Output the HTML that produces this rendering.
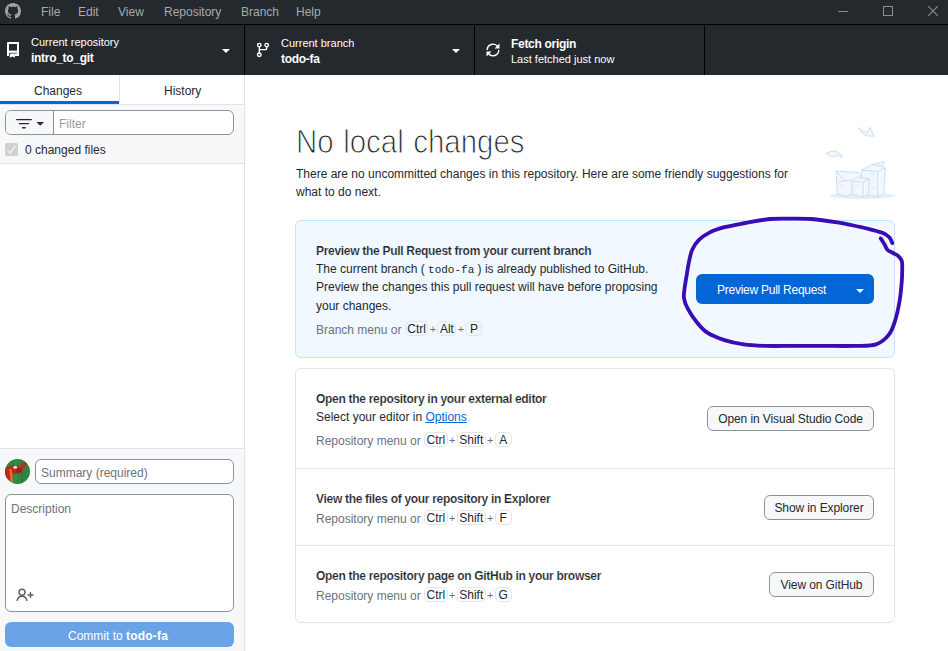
<!DOCTYPE html>
<html><head><meta charset="utf-8">
<style>
*{box-sizing:border-box;margin:0;padding:0}
html,body{width:948px;height:651px;overflow:hidden;background:#fff;font-family:"Liberation Sans",sans-serif;font-size:12px;color:#24292e;position:relative}
.a{position:absolute;white-space:nowrap;line-height:1}
#title{position:absolute;left:0;top:0;width:948px;height:24px;background:#24292e}
#title .m{position:absolute;top:5px;color:#a8abad;font-size:12px;white-space:nowrap}
#tline{position:absolute;left:0;top:24px;width:948px;height:1px;background:#000}
#toolbar{position:absolute;left:0;top:25px;width:948px;height:50px;background:#24292e}
.sep{position:absolute;top:25px;width:1px;height:50px;background:#000}
.tb1{position:absolute;color:#fff;font-size:11px;white-space:nowrap;line-height:1}
.tb2{position:absolute;color:#fff;font-size:12px;font-weight:bold;white-space:nowrap;line-height:1;letter-spacing:-0.3px}
.b{font-weight:bold;letter-spacing:-0.3px}
.g{color:#6a737d}
.kbd{display:inline-block;border:1px solid #e1e4e8;border-radius:5px;padding:0 1.5px;line-height:15px;height:15px;vertical-align:1px;color:#24292e;background:transparent;min-width:17px;text-align:center}
.plus{display:inline-block;width:9px;text-align:center;color:#6a737d;font-size:11px;vertical-align:1px}
.btn{position:absolute;border:1px solid #8a939d;border-radius:6px;background:#f6f8fa;color:#24292e;text-align:center;line-height:25px;white-space:nowrap;letter-spacing:-0.1px}
</style></head><body>
<div id="title">
  <svg style="position:absolute;left:5px;top:3px" width="16" height="16" viewBox="0 0 16 16"><path fill="#9da1a5" d="M8 0C3.58 0 0 3.58 0 8c0 3.54 2.29 6.53 5.47 7.59.4.07.55-.17.55-.38 0-.19-.01-.82-.01-1.49-2.01.37-2.530-.49-2.690-.94-.09-.23-.48-.94-.82-1.13-.28-.15-.68-.52-.01-.53.63-.01 1.08.58 1.23.82.72 1.21 1.87.87 2.33.66.07-.52.28-.87.51-1.07-1.78-.2-3.64-.89-3.64-3.95 0-.87.31-1.59.82-2.15-.08-.2-.36-1.02.08-2.12 0 0 .67-.21 2.2.82.64-.18 1.32-.27 2-.27.68 0 1.36.09 2 .27 1.53-1.04 2.2-.82 2.2-.82.44 1.1.16 1.92.08 2.12.51.56.82 1.27.82 2.15 0 3.07-1.87 3.75-3.65 3.95.29.25.54.73.54 1.48 0 1.07-.01 1.93-.01 2.2 0 .21.15.46.55.38A8.013 8.013 0 0016 8c0-4.42-3.58-8-8-8z"/></svg>
  <span class="m" style="left:41px">File</span>
  <span class="m" style="left:78px">Edit</span>
  <span class="m" style="left:118px">View</span>
  <span class="m" style="left:164px">Repository</span>
  <span class="m" style="left:241px">Branch</span>
  <span class="m" style="left:296px">Help</span>
  <div style="position:absolute;left:838px;top:11px;width:10px;height:1px;background:#8b8e91"></div>
  <div style="position:absolute;left:883px;top:6px;width:10px;height:10px;border:1px solid #8b8e91"></div>
  <svg style="position:absolute;left:928px;top:6px" width="10" height="10" viewBox="0 0 10 10"><path d="M0 0L10 10M10 0L0 10" stroke="#8b8e91" stroke-width="1.1"/></svg>
</div>
<div id="tline"></div>
<div id="toolbar"></div>
<div class="sep" style="left:244px"></div>
<div class="sep" style="left:474px"></div>
<div class="sep" style="left:704px"></div>

<!-- repo icon -->
<svg style="position:absolute;left:4px;top:40px" width="20" height="20" viewBox="4 40 20 20"><g fill="#fff"><path d="M7 43Q7 42 8 42H19V44H9V56H7Z"/><rect x="17" y="42" width="2" height="14"/><rect x="7" y="50.6" width="12" height="2.2"/><rect x="15" y="53.5" width="4" height="2.5"/><path d="M9.8 53.5H14.9V57.8L12.35 56.4L9.8 57.8Z"/></g></svg>
<div class="tb1" style="left:31px;top:37px">Current repository</div>
<div class="tb2" style="left:31px;top:52px">intro_to_git</div>
<svg style="position:absolute;left:222px;top:49px" width="8" height="4" viewBox="0 0 8 4"><path fill="#fff" d="M0 0h8L4 4z"/></svg>

<!-- branch icon -->
<svg style="position:absolute;left:252px;top:38px" width="22" height="22" viewBox="252 38 22 22"><g fill="none" stroke="#fff" stroke-width="1.4"><circle cx="259.3" cy="45.1" r="1.75"/><circle cx="259.3" cy="54.7" r="1.75"/><circle cx="266.7" cy="45.1" r="1.75"/><path d="M259.3 46.9V52.9M266.7 46.9V48.5Q266.7 49.65 265.5 49.65H259.3"/></g></svg>
<div class="tb1" style="left:281px;top:38px">Current branch</div>
<div class="tb2" style="left:281px;top:53px">todo-fa</div>
<svg style="position:absolute;left:452px;top:49px" width="8" height="4" viewBox="0 0 8 4"><path fill="#fff" d="M0 0h8L4 4z"/></svg>

<!-- sync icon -->
<svg style="position:absolute;left:485px;top:42px" width="16" height="16" viewBox="0 0 16 16"><g fill="none" stroke="#fff" stroke-width="1.4"><path d="M2.2 8A5.8 5.8 0 0 1 12.6 4.5"/><path d="M13.8 8A5.8 5.8 0 0 1 3.4 11.5"/></g><path fill="#fff" d="M14.5 1.5v5h-5z M1.5 14.5v-5h5z"/></svg>
<div class="tb2" style="left:511px;top:38px">Fetch origin</div>
<div class="tb1" style="left:511px;top:54px">Last fetched just now</div>

<!-- sidebar -->
<div style="position:absolute;left:0;top:75px;width:244px;height:576px;background:#fff"></div>
<div style="position:absolute;left:244px;top:75px;width:1px;height:576px;background:#e1e4e8"></div>
<div style="position:absolute;left:119px;top:75px;width:1px;height:29px;background:#e1e4e8"></div>
<div style="position:absolute;left:0;top:104px;width:244px;height:1px;background:#e1e4e8"></div>
<div style="position:absolute;left:0;top:101px;width:119px;height:3px;background:#0366d6"></div>
<div class="a" style="left:34px;top:85px">Changes</div>
<div class="a" style="left:164px;top:85px">History</div>
<div style="position:absolute;left:0;top:105px;width:244px;height:58px;background:#f6f8fa"></div>
<div style="position:absolute;left:0;top:163px;width:244px;height:1px;background:#e1e4e8"></div>
<!-- filter -->
<div style="position:absolute;left:5px;top:110px;width:229px;height:25px;border:1px solid #8a939d;border-radius:6px;background:#fff;overflow:hidden">
  <div style="position:absolute;left:0;top:0;width:48px;height:23px;background:#f6f8fa;border-right:1px solid #8a939d"></div>
</div>
<svg style="position:absolute;left:15px;top:117px" width="30" height="12" viewBox="0 0 30 12"><g stroke="#24292e" stroke-width="1.4" stroke-linecap="round"><path d="M1.7 2.6h14.6M4.4 6.6h9.2M7.6 10.8h2.6"/></g><path fill="#24292e" d="M21.4 5h7.6l-3.8 3.8z"/></svg>
<div class="a g" style="left:59px;top:118px;color:#959da5">Filter</div>
<!-- checkbox -->
<div style="position:absolute;left:5px;top:143px;width:13px;height:13px;background:#cfd0d1;border-radius:2px"></div>
<svg style="position:absolute;left:6px;top:144px" width="11" height="11" viewBox="0 0 11 11"><path d="M1.4 6.3L4.1 9L9.5 1.8" fill="none" stroke="#ededed" stroke-width="1.7"/></svg>
<div class="a" style="left:25px;top:144px">0 changed files</div>

<!-- commit area -->
<div style="position:absolute;left:0;top:448px;width:244px;height:1px;background:#e1e4e8"></div>
<div style="position:absolute;left:0;top:449px;width:244px;height:202px;background:#f6f8fa"></div>
<svg style="position:absolute;left:5px;top:459px" width="25" height="25" viewBox="0 0 25 25"><defs><clipPath id="av"><circle cx="12.5" cy="12.5" r="12.5"/></clipPath></defs><g clip-path="url(#av)"><rect width="25" height="25" fill="#2f8544"/><rect x="9" y="0" width="3" height="25" fill="#3a9450" opacity=".5"/><rect x="16" y="0" width="2" height="25" fill="#247038" opacity=".5"/><path fill="#b8281c" d="M0 10L3 7.5L7 6.5L10 6L13 6.5L15 8L17 5L19.5 2.8L22 4L20.5 7.5L18 10L17 13.5L12 15L8.5 15L7 19L3.5 20.5L0 19Z"/><path fill="#951f17" d="M11 9.5L15.5 9L16.5 13L12.5 14Z"/><path fill="#d9741f" d="M4 10L6.5 10L7.8 16L7.6 24L5.6 23.5L5 16Z"/><ellipse cx="10.2" cy="8.2" rx="1.9" ry="1.5" fill="#f0dede"/></g></svg>
<div style="position:absolute;left:35px;top:459px;width:199px;height:25px;border:1px solid #8a939d;border-radius:6px;background:#fff"></div>
<div class="a" style="left:41px;top:467px;color:#6a737d">Summary (required)</div>
<div style="position:absolute;left:5px;top:494px;width:229px;height:118px;border:1px solid #8a939d;border-radius:6px;background:#fff"></div>
<div class="a" style="left:11px;top:503px;color:#6a737d">Description</div>
<svg style="position:absolute;left:16px;top:588px" width="19" height="14" viewBox="0 0 19 14"><g fill="none" stroke="#586069" stroke-width="1.4"><circle cx="6" cy="4.2" r="3"/><path d="M1 13c.6-3 2.6-4.7 5-4.7s4.4 1.7 5 4.7"/><path d="M11.5 7h6M14.5 4v6"/></g></svg>
<div style="position:absolute;left:5px;top:622px;width:229px;height:25px;border-radius:6px;background:#6aa3e6"></div>
<div class="a" style="left:68px;top:630px;color:#fff">Commit to <b style="letter-spacing:0.2px">todo-fa</b></div>

<!-- main content -->
<div class="a" style="left:296px;top:125px;font-size:33px;color:#24292e;word-spacing:1.5px;transform:scaleX(0.892);transform-origin:0 0;-webkit-text-stroke:1px #fff">No local changes</div>
<div class="a" style="left:296px;top:168px">There are no uncommitted changes in this repository. Here are some friendly suggestions for</div>
<div class="a" style="left:296px;top:186px">what to do next.</div>

<!-- illustration -->
<svg style="position:absolute;left:820px;top:120px" width="80" height="85" viewBox="820 120 80 85"><ellipse cx="862.5" cy="195.8" rx="32.5" ry="3.2" fill="#e4eef9"/>
<g fill="#f2f7fd" stroke="#c3d7ef" stroke-width="0.8" stroke-linejoin="round">
<path d="M858.8 127.8Q861 133.5 866 135.7L874.4 136.3L869.9 127.2L867.5 132.6Q862 131 858.8 127.8Z"/>
<path d="M826 153.5Q830 150.5 836 151.3Q841 153 842.4 158Q840 155.5 837.5 155.5L834 157.2Q829 156 826 153.5Z"/>
<path d="M861.5 170L872 164.5L884.6 161.5L882 166.5L885.4 168L883.8 194.2L877.7 196.9L862.5 193.5Z"/>
<path d="M861.5 170L877.7 171.5L885.4 168M877.7 171.5V196.9M872 164.5L882 166.5" fill="none"/>
<path d="M836.2 171.2L858 172.5L860.5 175L860 179L852.3 181.2L852.3 194L844.6 196.2L837.3 193.5Z"/>
<path d="M836.2 171.2L844.6 180.4M838 182L852 180" fill="none"/>
<path d="M852.3 181.2L857 177.5L869.2 178.8L868.5 194.2L863 197.3L852.3 193.8Z"/>
<path d="M852.3 181.2L863 182.3L869.2 178.8M863 182.3V197.3" fill="none"/>
<path d="M870 174h5M870 181h5M870 188h5M855 186h4M840 186h3" fill="none" stroke="#d3e2f4"/>
</g></svg>
<!-- PR card -->
<div style="position:absolute;left:295px;top:220px;width:600px;height:138px;border:1px solid #c8e1ff;border-radius:6px;background:#f1f8ff"></div>
<div class="a b" style="left:316px;top:245px;-webkit-text-stroke:0.15px #f1f8ff">Preview the Pull Request from your current branch</div>
<div class="a" style="left:316px;top:263px">The current branch ( <span style="font-family:'Liberation Mono';font-size:11px">todo-fa</span> ) is already published to GitHub.</div>
<div class="a" style="left:316px;top:281px">Preview the changes this pull request will have before proposing</div>
<div class="a" style="left:316px;top:300px">your changes.</div>
<div class="a g" style="left:316px;top:321px">Branch menu or <span class="kbd">Ctrl</span><span class="plus">+</span><span class="kbd">Alt</span><span class="plus">+</span><span class="kbd">P</span></div>
<div style="position:absolute;left:696px;top:274px;width:178px;height:30px;border-radius:6px;background:#0366d6"></div>
<div style="position:absolute;left:846px;top:274px;width:1px;height:30px;background:#0561cc"></div>
<div class="a" style="left:717px;top:284px;color:#fff;letter-spacing:-0.25px">Preview Pull Request</div>
<svg style="position:absolute;left:856px;top:289px" width="8" height="4" viewBox="0 0 8 4"><path fill="#fff" d="M0 0h8L4 4z"/></svg>

<!-- actions card -->
<div style="position:absolute;left:295px;top:368px;width:600px;height:255px;border:1px solid #e1e4e8;border-radius:6px;background:#fff"></div>
<div style="position:absolute;left:296px;top:468px;width:598px;height:1px;background:#e1e4e8"></div>
<div style="position:absolute;left:296px;top:545px;width:598px;height:1px;background:#e1e4e8"></div>

<div class="a b" style="left:316px;top:393px;-webkit-text-stroke:0.15px #fff">Open the repository in your external editor</div>
<div class="a" style="left:316px;top:411px">Select your editor in <span style="color:#0366d6;text-decoration:underline">Options</span></div>
<div class="a g" style="left:316px;top:432px">Repository menu or <span class="kbd">Ctrl</span><span class="plus">+</span><span class="kbd">Shift</span><span class="plus">+</span><span class="kbd">A</span></div>
<div class="btn" style="left:707px;top:406px;width:167px;height:25px">Open in Visual Studio Code</div>

<div class="a b" style="left:316px;top:493px;-webkit-text-stroke:0.15px #fff">View the files of your repository in Explorer</div>
<div class="a g" style="left:316px;top:510px">Repository menu or <span class="kbd">Ctrl</span><span class="plus">+</span><span class="kbd">Shift</span><span class="plus">+</span><span class="kbd">F</span></div>
<div class="btn" style="left:764px;top:495px;width:110px;height:25px">Show in Explorer</div>

<div class="a b" style="left:316px;top:570px;-webkit-text-stroke:0.15px #fff">Open the repository page on GitHub in your browser</div>
<div class="a g" style="left:316px;top:587px">Repository menu or <span class="kbd">Ctrl</span><span class="plus">+</span><span class="kbd">Shift</span><span class="plus">+</span><span class="kbd">G</span></div>
<div class="btn" style="left:769px;top:572px;width:105px;height:25px">View on GitHub</div>

<!-- hand drawn circle -->
<svg style="position:absolute;left:0;top:0" width="948" height="651" viewBox="0 0 948 651"><path fill="none" stroke="#3a0cb4" stroke-width="3.8" stroke-linecap="round" stroke-linejoin="round" d="M892.3 243.0C891.8 242.1 891.0 239.2 889.5 237.5C888.0 235.8 886.2 234.4 883.0 233.0C879.8 231.6 873.8 230.3 870.0 229.3C866.2 228.3 865.5 228.1 860.0 226.9C854.5 225.8 845.4 223.7 837.3 222.4C829.2 221.1 819.4 219.6 811.5 219.0C803.6 218.4 797.0 218.6 790.0 218.6C783.0 218.6 776.9 218.3 769.6 219.0C762.3 219.7 753.5 221.5 746.0 222.9C738.5 224.3 730.6 225.6 724.5 227.2C718.4 228.8 713.7 230.4 709.4 232.6C705.1 234.8 701.6 237.2 698.7 240.1C695.8 243.0 693.8 246.2 692.2 249.8C690.6 253.4 689.9 257.5 689.0 261.6C688.1 265.7 687.5 270.2 686.8 274.5C686.1 278.8 685.2 283.4 684.7 287.4C684.2 291.3 683.5 294.6 684.0 298.2C684.5 301.8 685.8 305.0 687.9 308.9C690.0 312.8 693.3 317.9 696.5 321.8C699.7 325.8 702.6 329.6 707.3 332.6C712.0 335.7 718.4 338.1 724.5 340.1C730.6 342.1 737.0 343.4 743.8 344.4C750.6 345.4 756.8 345.6 765.3 345.9C773.8 346.1 785.5 345.9 795.0 345.9C804.5 345.9 812.4 345.9 822.3 345.9C832.2 345.9 845.5 346.1 854.5 345.9C863.5 345.6 870.3 346.3 876.0 344.4C881.7 342.5 885.7 338.8 888.9 334.7C892.1 330.6 893.6 325.4 895.4 319.7C897.2 314.0 898.6 306.8 899.7 300.3C900.8 293.9 901.4 286.1 901.8 281.0C902.2 275.9 902.2 273.2 902.2 270.0C902.2 266.8 902.5 263.8 901.9 261.5C901.3 259.2 899.9 257.5 898.4 256.1C896.9 254.7 894.8 254.0 893.0 253.0C891.2 252.0 889.0 251.4 887.6 250.0C886.2 248.6 885.8 246.5 884.6 244.6C883.5 242.7 881.4 239.4 880.7 238.4"/></svg>
</body></html>
